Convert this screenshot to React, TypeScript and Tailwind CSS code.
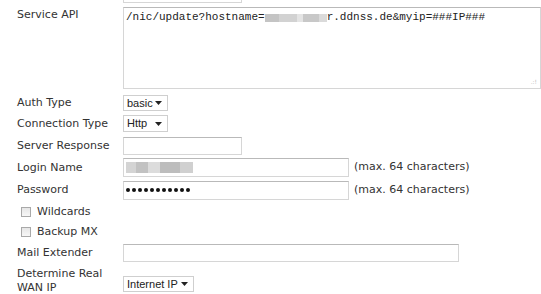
import React from 'react'

const label = "w-[123px] shrink-0 pl-[17px] text-[11px] leading-[14px] text-[#333]"
const inputBox = "border border-[#d6d6d6] border-t-[#b9b9b9] bg-white"

function Select({ text, width, height }: { text: string; width: number; height: number }) {
  return (
    <div
      className="flex items-center justify-between border border-[#cfcfcf] bg-white pl-[3px] pr-[5px] text-[11px] text-[#222] [font-family:'Liberation_Sans',Arial,sans-serif]"
      style={{ width, height }}
    >
      <span>{text}</span>
      <svg width="7" height="4" viewBox="0 0 7 4">
        <path d="M0 0 H7 L3.5 4 Z" fill="#222" />
      </svg>
    </div>
  )
}

function Checkbox() {
  return <div className="w-[10px] h-[10px] border border-[#a9a9a9] bg-gradient-to-b from-[#e6e6e6] to-[#f7f7f7]" />
}

export default function App() {
  return (
    <div className="w-[541px] h-[294px] overflow-hidden bg-white [font-family:'DejaVu_Sans',Verdana,sans-serif]">
      {/* partial row from above */}
      <div className="flex">
        <div className="w-[123px] shrink-0" />
        <div className={`${inputBox} w-[119px] h-[18px] mt-[-15px]`} />
      </div>

      {/* Service API */}
      <div className="flex mt-[4px] h-[82px]">
        <div className={`${label} pt-[1px]`}>Service API</div>
        <div className={`${inputBox} relative flex-1 h-[82px]`}>
          <div className="flex items-center pl-[2px] pt-[3px] text-[11px] leading-[13px] text-[#222] [font-family:'Liberation_Mono',monospace]">
            <span>/nic/update?hostname=</span>
            <div className="flex h-[8px] w-[62px]">
              <div className="w-[14px] bg-[#c4c4c4]" />
              <div className="w-[18px] bg-[#d2d2d2]" />
              <div className="w-[6px] bg-[#e4e4e4]" />
              <div className="w-[16px] bg-[#c8c8c8]" />
              <div className="w-[8px] bg-[#dadada]" />
            </div>
            <span>r.ddnss.de&amp;myip=###IP###</span>
          </div>
          <div className="absolute right-[3px] bottom-[3px] text-[6px] leading-[6px] text-[#bbb]">.:!</div>
        </div>
      </div>

      {/* Auth Type */}
      <div className="flex items-center h-[20px] mt-[4px]">
        <div className={label}>Auth Type</div>
        <Select text="basic" width={45} height={16} />
      </div>

      {/* Connection Type */}
      <div className="flex items-center h-[21px]">
        <div className={label}>Connection Type</div>
        <Select text="Http" width={45} height={17} />
      </div>

      {/* Server Response */}
      <div className="flex items-center h-[23px]">
        <div className={label}>Server Response</div>
        <div className={`${inputBox} w-[119px] h-[18px]`} />
      </div>

      {/* Login Name */}
      <div className="flex items-center h-[21px]">
        <div className={label}>Login Name</div>
        <div className={`${inputBox} flex items-center pl-[2px] w-[226px] h-[19px]`}>
          <div className="flex h-[11px] w-[67px]">
            <div className="w-[10px] bg-[#d4d4d4]" />
            <div className="w-[12px] bg-[#c2c2c2]" />
            <div className="w-[12px] bg-[#dcdcdc]" />
            <div className="w-[20px] bg-[#bdbdbd]" />
            <div className="w-[13px] bg-[#d0d0d0]" />
          </div>
        </div>
        <div className="pl-[5px] text-[11px] text-[#333]">(max. 64 characters)</div>
      </div>

      {/* Password */}
      <div className="flex items-center h-[24px]">
        <div className={label}>Password</div>
        <div className={`${inputBox} flex items-center gap-[2px] pl-[2px] w-[226px] h-[19px]`}>
          {Array.from({ length: 11 }).map((_, i) => (
            <div key={i} className="w-[4px] h-[4px] rounded-full bg-[#111]" />
          ))}
        </div>
        <div className="pl-[5px] text-[11px] text-[#333]">(max. 64 characters)</div>
      </div>

      {/* Wildcards */}
      <div className="flex items-center h-[20px] pl-[21px] gap-[6px]">
        <Checkbox />
        <span className="text-[11px] text-[#333]">Wildcards</span>
      </div>

      {/* Backup MX */}
      <div className="flex items-center h-[20px] pl-[21px] gap-[6px]">
        <Checkbox />
        <span className="text-[11px] text-[#333]">Backup MX</span>
      </div>

      {/* Mail Extender */}
      <div className="flex items-center h-[21px]">
        <div className={label}>Mail Extender</div>
        <div className={`${inputBox} w-[336px] h-[18px]`} />
      </div>

      {/* Determine Real WAN IP */}
      <div className="flex items-start h-[31px]">
        <div className={`${label} mt-[4px]`}>
          Determine Real
          <br />
          WAN IP
        </div>
        <div className="mt-[13px]">
          <Select text="Internet IP" width={71} height={16} />
        </div>
      </div>
    </div>
  )
}
